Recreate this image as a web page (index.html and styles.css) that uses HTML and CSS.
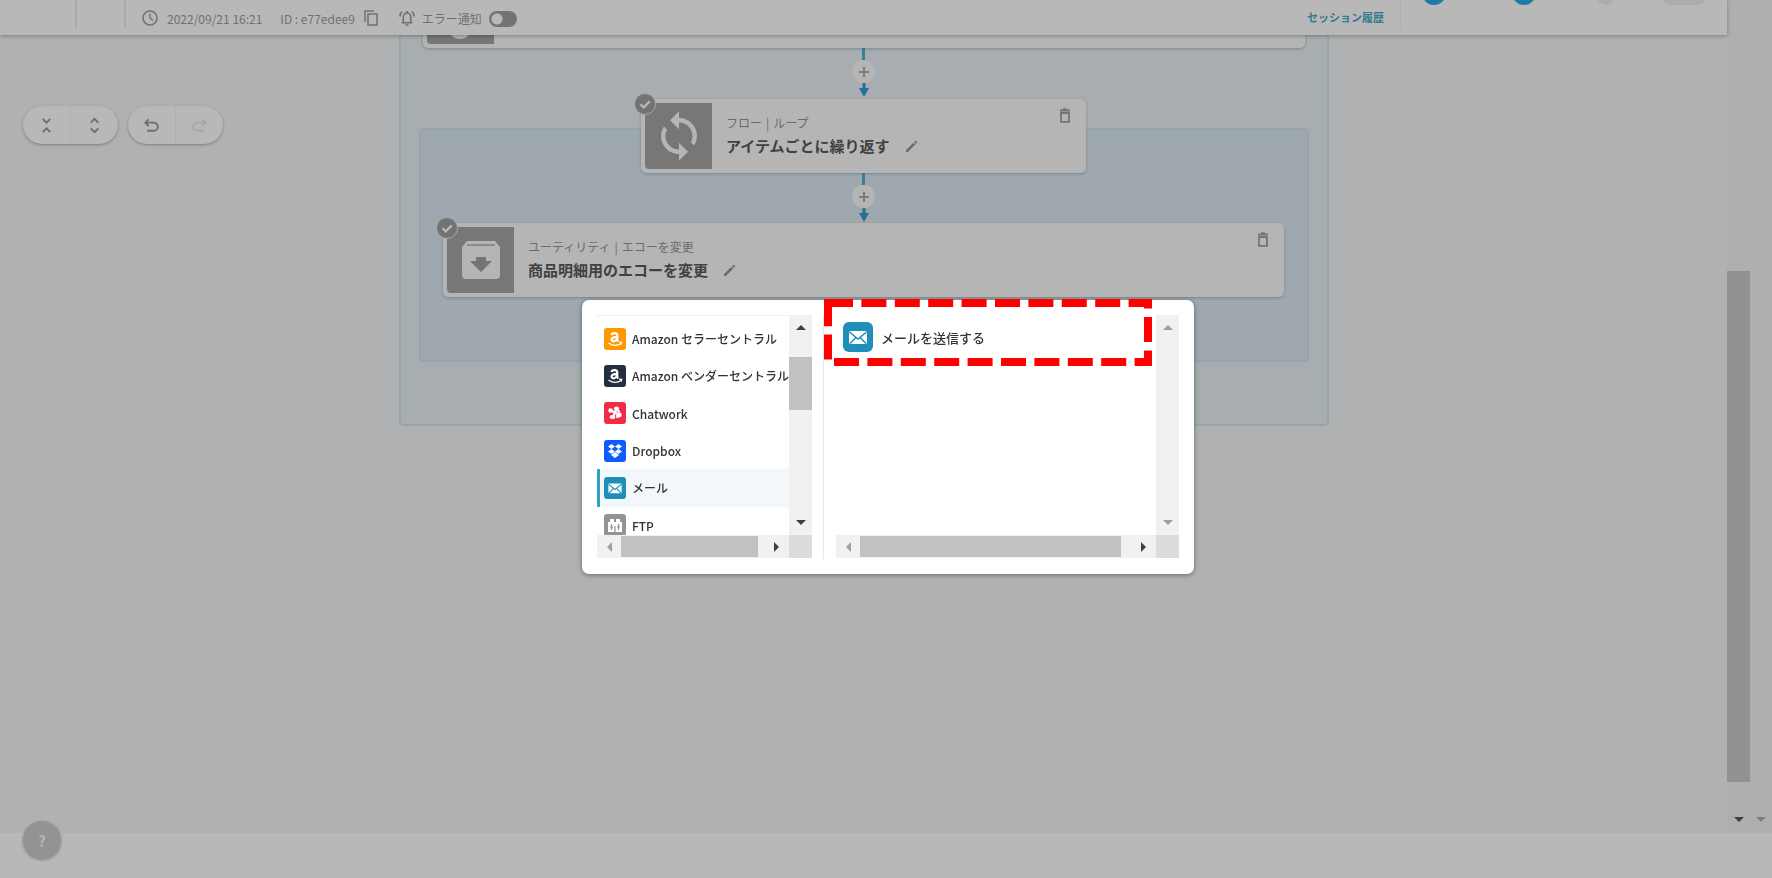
FILE: index.html
```html
<!DOCTYPE html>
<html lang="ja">
<head>
    <meta charset="UTF-8">
    <meta name="viewport" content="width=device-width, initial-scale=1.0">
    <title>フローエディタ</title>
    <link rel="stylesheet" href="styles.css">
</head>
<body>
    <svg class="sprite" aria-hidden="true">
        <symbol id="trash" viewBox="0 0 12 15">
            <path d="M1 2.500h10M4 1.200h4M2 5h8v8.800H2z" fill="none" stroke="currentColor" stroke-width="1.800"/>
        </symbol>
        <symbol id="pencil" viewBox="0 0 24 24">
            <path d="M2 18.500V22h3.500L19 8.500 15.500 5zM22 5.500a1.300 1.300 0 0 0 0-1.800l-1.700-1.700a1.300 1.300 0 0 0-1.800 0L17 3.500 20.500 7z" fill="currentColor"/>
        </symbol>
        <symbol id="amazon" viewBox="0 0 22 22">
            <path d="M7.500 7C8 4.300 13.200 4.300 13.200 7.500v3.700q0 1.300 1.200 2M13 9C10 9 7.600 9.500 7.600 11.500c0 2.600 4.200 2.400 5.400-.6" fill="none" stroke="#fff" stroke-width="2.300"/>
            <path d="M4.500 15q6.500 4.500 12.500.5M15.200 14.200l2.400.2-.5 2.300" fill="none" stroke="#fff" stroke-width="1.400"/>
        </symbol>
        <symbol id="mail" viewBox="0 0 30 30">
            <rect x="6" y="9" width="18" height="13" rx="1.500" fill="#fff"/>
            <path d="M6.500 10l8.500 7 8.500-7M7 21.500l6-6M23 21.500l-6-6" fill="none" stroke="#1d8fb8" stroke-width="1.500"/>
        </symbol>
        <symbol id="check" viewBox="0 0 22 22">
            <circle cx="11" cy="11" r="10.500" fill="#737373" stroke="#a5a9aa"/>
            <path d="M6.500 11.200l3.200 3.200 6-6" fill="none" stroke="#b8b8b8" stroke-width="2.200"/>
        </symbol>
        <symbol id="arrow" viewBox="0 0 10 14">
            <path d="M3.500 0h3v5H10L5 14 0 5h3.500z" fill="#23728f"/>
        </symbol>
        <symbol id="plus" viewBox="0 0 12 12">
            <path d="M6 1v10M1 6h10" stroke="#7d7d7d" stroke-width="2"/>
        </symbol>
    </svg>

    <div class="app">
        <header class="header">
            <div class="header-cell header-menu"></div>
            <div class="header-cell header-back"></div>
            <div class="meta">
                <svg class="icon-clock" viewBox="0 0 16 16"><circle cx="8" cy="8" r="7" fill="none" stroke="currentColor" stroke-width="1.500"/><path d="M8 3.800V8l3 2.500" fill="none" stroke="currentColor" stroke-width="1.300"/></svg>
                <span class="date">2022/09/21 16:21</span>
                <span class="flow-id">ID : e77edee9</span>
                <button class="icon-btn copy" aria-label="IDをコピー">
                    <svg viewBox="0 0 14 16"><path d="M1 12V1h9M4 4h9v11H4z" fill="none" stroke="currentColor" stroke-width="1.500"/></svg>
                </button>
                <svg class="icon-bell" viewBox="0 0 16 16"><path d="M2.500 12.800h11M4.300 12.500V7a3.700 4 0 0 1 7.400 0v5.500M8 1v2M6.500 15h3M1 6.500q0-3 2-5M15 6.500q0-3-2-5" fill="none" stroke="currentColor" stroke-width="1.600"/></svg>
                <label for="notify">エラー通知</label>
                <input type="checkbox" id="notify" class="toggle">
            </div>
            <a href="#" class="history">セッション履歴</a>
            <div class="actions">
                <button class="action blue" aria-label="テスト"></button>
                <button class="action blue" aria-label="保存"></button>
                <button class="action dot" aria-label="メニュー"></button>
                <button class="action bar" aria-label="公開"></button>
            </div>
        </header>

        <main class="canvas">
            <div class="toolbar">
                <div class="pill">
                    <button aria-label="折りたたむ"><svg viewBox="0 0 18 18"><path d="M5 2l4 4 4-4M5 16l4-4 4 4" fill="none" stroke="currentColor" stroke-width="2"/></svg></button>
                    <button aria-label="展開する"><svg viewBox="0 0 18 18"><path d="M5 6l4-4 4 4M5 12l4 4 4-4" fill="none" stroke="currentColor" stroke-width="2"/></svg></button>
                </div>
                <div class="pill">
                    <button aria-label="元に戻す"><svg viewBox="0 0 18 18"><path d="M6 2.500l-3.500 3.500L6 9.500M2.500 6h9a4.200 4.200 0 0 1 0 8.500H4.500" fill="none" stroke="currentColor" stroke-width="2"/></svg></button>
                    <button aria-label="やり直す" disabled><svg viewBox="0 0 18 18"><path d="M12 2.500l3.500 3.500L12 9.500M15.500 6h-9a4.200 4.200 0 0 0 0 8.500h7" fill="none" stroke="currentColor" stroke-width="2"/></svg></button>
                </div>
            </div>

            <div class="group outer">
                <article class="card card-top">
                    <div class="card-icon"><span class="half-circle"></span></div>
                </article>

                <div class="connector">
                    <span class="line"></span>
                    <button class="add" aria-label="追加"><svg><use href="#plus"/></svg></button>
                    <svg class="arrow"><use href="#arrow"/></svg>
                </div>

                <div class="group inner">
                    <article class="card card-loop">
                        <svg class="check"><use href="#check"/></svg>
                        <div class="card-icon">
                            <svg viewBox="0 0 24 24" class="glyph-loop"><path d="M12 4V1L8 5l4 4V6c3.310 0 6 2.690 6 6 0 1.010-.25 1.970-.7 2.800l1.460 1.460A7.930 7.930 0 0 0 20 12c0-4.420-3.580-8-8-8zm0 14c-3.310 0-6-2.690-6-6 0-1.010.25-1.970.7-2.800L5.240 7.740A7.930 7.930 0 0 0 4 12c0 4.420 3.580 8 8 8v3l4-4-4-4v3z" fill="#b5b5b5"/></svg>
                        </div>
                        <div class="card-body">
                            <p class="category">フロー<span>|</span>ループ</p>
                            <h2>アイテムごとに繰り返す <button class="icon-btn edit" aria-label="名前を編集"><svg><use href="#pencil"/></svg></button></h2>
                        </div>
                        <button class="icon-btn delete" aria-label="削除"><svg><use href="#trash"/></svg></button>
                    </article>

                    <div class="connector">
                        <span class="line"></span>
                        <button class="add" aria-label="追加"><svg><use href="#plus"/></svg></button>
                        <svg class="arrow"><use href="#arrow"/></svg>
                    </div>

                    <article class="card card-echo">
                        <svg class="check"><use href="#check"/></svg>
                        <div class="card-icon">
                            <svg viewBox="0 0 40 40" class="glyph-echo"><path d="M6 1h28l5 6v28a4 4 0 0 1-4 4H5a4 4 0 0 1-4-4V7z" fill="#b5b5b5"/><path d="M6 5h28" stroke="#8b8b8b" stroke-width="2"/><path d="M15 17h10v4h6L20 32 9 21h6z" fill="#737373"/></svg>
                        </div>
                        <div class="card-body">
                            <p class="category">ユーティリティ<span>|</span>エコーを変更</p>
                            <h2>商品明細用のエコーを変更 <button class="icon-btn edit" aria-label="名前を編集"><svg><use href="#pencil"/></svg></button></h2>
                        </div>
                        <button class="icon-btn delete" aria-label="削除"><svg><use href="#trash"/></svg></button>
                    </article>
                </div>
            </div>
        </main>

        <div class="page-scroll">
            <div class="page-thumb"></div>
            <span class="tri down dark"></span>
            <span class="tri down light"></span>
        </div>

        <footer class="footer"></footer>
    </div>

    <button class="help" aria-label="ヘルプ">?</button>

    <div class="modal" role="dialog" aria-label="アプリを選択">
        <div class="pane pane-apps">
            <div class="view">
                <ul class="apps">
                    <li><button><span class="app-icon seller"><svg><use href="#amazon"/></svg></span>Amazon セラーセントラル</button></li>
                    <li><button><span class="app-icon vendor"><svg><use href="#amazon"/></svg></span>Amazon ベンダーセントラル</button></li>
                    <li><button><span class="app-icon chatwork"><svg viewBox="0 0 22 22"><g fill="#fff"><ellipse cx="12.500" cy="6.500" rx="2.600" ry="2"/><ellipse cx="6.500" cy="8.500" rx="2.200" ry="2.300"/><ellipse cx="15.500" cy="12.800" rx="2.200" ry="2.600"/><ellipse cx="8.500" cy="15" rx="2.800" ry="2.100"/></g><path d="M7 8.500l8 4.200M12.500 7L9 15M15.500 8.500l-2 1.500M13 13l.5 3" stroke="#fff" stroke-width="2.200"/></svg></span>Chatwork</button></li>
                    <li><button><span class="app-icon dropbox"><svg viewBox="0 0 22 22"><path d="M7.500 4L11 6.500 7.500 9 4 6.500zM14.500 4L18 6.500 14.500 9 11 6.500zM7.500 9L11 11.500 7.500 14 4 11.500zM14.500 9l3.500 2.500-3.500 2.500-3.500-2.500zM7 15l4-3 4 3-4 3z" fill="#fff"/></svg></span>Dropbox</button></li>
                    <li class="selected"><button><span class="app-icon email"><svg viewBox="0 0 30 30"><use href="#mail"/></svg></span>メール</button></li>
                    <li><button><span class="app-icon ftp"><svg viewBox="0 0 22 22"><path d="M4 8h14v10H4zM6 5h4v4H6zM12 5h4v4h-4z" fill="#fff"/><path d="M7.500 10v6M14.500 10v6M11 12v6M6 13h3M13 13h3" stroke="#949494" stroke-width="1.200"/></svg></span>FTP</button></li>
                </ul>
            </div>
            <div class="scroll-v">
                <span class="tri up dark"></span>
                <div class="thumb-v"></div>
                <span class="tri down dark"></span>
            </div>
            <div class="scroll-h">
                <span class="tri left light"></span>
                <div class="thumb-h"></div>
                <span class="tri right dark"></span>
            </div>
            <div class="corner"></div>
        </div>
        <div class="pane pane-actions">
            <div class="view">
                <button class="operation"><span class="app-icon big"><svg><use href="#mail"/></svg></span>メールを送信する</button>
            </div>
            <div class="scroll-v">
                <span class="tri up light"></span>
                <span class="tri down light"></span>
            </div>
            <div class="scroll-h">
                <span class="tri left light"></span>
                <div class="thumb-h"></div>
                <span class="tri right dark"></span>
            </div>
            <div class="corner"></div>
        </div>
        <svg class="highlight" viewBox="0 0 328 68"><rect x="4" y="4" width="320" height="59" fill="none" stroke="#f00" stroke-width="8" stroke-dasharray="25 8.400"/></svg>
    </div>
</body>
</html>
```
FILE: styles.css
```css
* {
    box-sizing: border-box;
}
body {
    margin: 0;
    background: #b8b8b8;
    color: #3a3a3a;
    font-family: "Noto Sans CJK JP", "Noto Sans", sans-serif;
    font-size: 12px;
}
button {
    margin: 0;
    padding: 0;
    border: none;
    background: none;
    color: inherit;
    font: inherit;
    cursor: pointer;
}
svg {
    display: block;
}
.sprite {
    position: absolute;
    width: 0;
    height: 0;
}

/* page frame */
.app {
    display: grid;
    grid-template-columns: 1fr 45px;
    grid-template-rows: 35px 1fr 45px;
    height: 100vh;
    overflow: hidden;
}
.header {
    display: flex;
    z-index: 2;
    background: #b8b8b8;
    box-shadow: 0 1px 4px rgba(0, 0, 0, 0.3);
    color: #707070;
}
.header-cell {
    height: 28px;
    border-right: 2px solid #aaa;
}
.header-menu {
    width: 77px;
}
.header-back {
    width: 49px;
}
.meta {
    display: flex;
    align-items: center;
    height: 36px;
    margin-left: 16px;
    white-space: nowrap;
}
.icon-clock {
    width: 16px;
    height: 16px;
}
.date {
    margin-left: 9px;
}
.flow-id {
    margin-left: 18px;
}
.copy {
    margin: 0 21px 0 9px;
}
.copy svg {
    width: 14px;
    height: 16px;
}
.icon-bell {
    width: 16px;
    height: 16px;
    margin-right: 7px;
}
.toggle {
    appearance: none;
    width: 28px;
    height: 16px;
    margin: 2px 0 0 7px;
    border-radius: 8px;
    background: radial-gradient(circle at 8px 8px, #b8b8b8 5px, #737373 6px);
}
.history {
    margin-left: auto;
    padding-right: 16px;
    height: 28px;
    border-right: 1px solid #b0b0b0;
    color: #357a92;
    font-size: 11px;
    font-weight: bold;
    line-height: 35px;
    text-decoration: none;
}
.actions {
    display: flex;
    width: 326px;
    height: 24px;
    margin-top: -19px;
    padding-left: 21px;
}
.action {
    height: 24px;
    border-radius: 12px;
    background: #acacac;
}
.blue {
    width: 24px;
    margin-right: 66px;
    background: #1d7ba6;
}
.dot {
    width: 20px;
    margin: 0 44px 0 -6px;
}
.bar {
    width: 48px;
}
.canvas {
    position: relative;
    display: flex;
    flex-direction: column;
    align-items: center;
    overflow: hidden;
    background: #b0b1b3;
}
.page-scroll {
    grid-column: 2;
    grid-row: 1 / 3;
    display: grid;
    grid-template-columns: 23px 22px;
    grid-template-rows: 271fr 511fr 51fr;
    justify-items: center;
    background: #afafaf;
}
.page-thumb {
    grid-row: 2;
    width: 100%;
    background: #929292;
}
.page-scroll .tri {
    grid-row: 3;
    margin-top: 35px;
}
.page-scroll .dark {
    grid-column: 1;
}
.page-scroll .tri.light {
    grid-column: 2;
    color: #7c7c7c;
}
.footer {
    grid-column: 1 / 3;
    background: #b8b8b8;
}

/* canvas tools */
.toolbar {
    position: absolute;
    top: 71px;
    left: 23px;
    display: flex;
    gap: 10px;
}
.pill {
    display: flex;
    width: 95px;
    height: 38px;
    border-radius: 19px;
    background: #b8b8b8;
    box-shadow: 0 1px 3px rgba(0, 0, 0, 0.3);
    color: #6f6f6f;
}
.pill button {
    flex: 1;
    display: flex;
    align-items: center;
    justify-content: center;
}
.pill button + button {
    border-left: 1px solid #aeb0b2;
}
.pill button:disabled {
    color: #a5a5a5;
}
.pill svg {
    width: 17px;
    height: 17px;
}

/* flow nodes */
.group {
    display: flex;
    flex-direction: column;
    align-items: center;
    border: 2px solid #93a6ac;
    border-radius: 5px;
}
.outer {
    width: 930px;
    padding-bottom: 62px;
    border-top: none;
    border-radius: 0 0 5px 5px;
    background: #a7adb0;
}
.inner {
    width: 890px;
    margin-top: 30px;
    padding-bottom: 63px;
    background: #9fa8af;
}
.card {
    position: relative;
    display: flex;
    height: 74px;
    padding: 4px;
    border-radius: 5px;
    background: #b5b5b5;
    box-shadow: 0 1px 3px rgba(60, 80, 85, 0.4);
}
.card-top {
    width: 882px;
    margin-top: -61px;
}
.card-loop {
    width: 445px;
    margin-top: -31px;
}
.card-echo {
    width: 841px;
}
.card-icon {
    display: flex;
    align-items: center;
    justify-content: center;
    width: 67px;
    height: 66px;
    border-radius: 4px 0 0 4px;
    background: #777;
}
.card-top .card-icon {
    align-items: flex-end;
}
.half-circle {
    width: 24px;
    height: 24px;
    margin-bottom: 5px;
    border-radius: 50%;
    background: #b5b5b5;
}
.glyph-loop {
    width: 54px;
    height: 54px;
}
.glyph-echo {
    width: 40px;
    height: 40px;
}
.check {
    position: absolute;
    top: -6px;
    left: -7px;
    width: 22px;
    height: 22px;
}
.card-body {
    padding: 10px 0 0 14px;
}
.category {
    margin: 0;
    color: #6b6b6b;
    line-height: 20px;
}
.category span {
    margin: 0 4px;
}
h2 {
    display: flex;
    align-items: center;
    gap: 15px;
    margin: 1px 0 0;
    color: #414141;
    font-size: 15px;
    line-height: 24px;
}
.edit {
    color: #6b6b6b;
}
.edit svg {
    width: 13px;
    height: 13px;
}
.delete {
    position: absolute;
    top: 9px;
    right: 15px;
    color: #747474;
}
.delete svg {
    width: 12px;
    height: 15px;
}
.connector {
    display: flex;
    flex-direction: column;
    align-items: center;
    height: 50px;
}
.line {
    width: 3px;
    height: 12px;
    background: #3b7f96;
}
.add {
    display: flex;
    align-items: center;
    justify-content: center;
    width: 23px;
    height: 23px;
    border-radius: 50%;
    background: #b5b5b5;
}
.add svg {
    width: 12px;
    height: 12px;
}
.arrow {
    width: 10px;
    height: 14px;
}
.help {
    position: fixed;
    bottom: 19px;
    left: 23px;
    width: 38px;
    height: 38px;
    border-radius: 50%;
    background: #939393;
    box-shadow: 0 1px 3px rgba(0, 0, 0, 0.3);
    color: #b8b8b8;
    font-size: 15px;
    font-weight: bold;
}

/* app picker */
.modal {
    position: fixed;
    z-index: 5;
    top: 300px;
    left: calc(50% - 304px);
    display: flex;
    width: 612px;
    height: 274px;
    padding: 15px;
    border-radius: 7px;
    background: #fff;
    box-shadow: 0 1px 5px rgba(0, 0, 0, 0.4);
}
.pane {
    display: grid;
    grid-template-columns: 1fr 23px;
    grid-template-rows: 220px 23px;
}
.pane-apps {
    width: 215px;
}
.pane-actions {
    flex: 1;
    margin-left: 11px;
    padding-left: 12px;
    border-left: 1px solid #e8e8e8;
}
.view {
    overflow: hidden;
}
.pane-apps .view {
    border-top: 1px solid #eee;
}
.apps {
    display: grid;
    grid-auto-rows: 1fr;
    height: 224px;
    margin: 4px 0 0;
    padding: 0;
    list-style: none;
}
.apps li {
    display: flex;
    border-left: 3px solid transparent;
}
.apps .selected {
    border-left-color: #35a0bd;
    background: #f2f7fb;
}
.apps button {
    display: flex;
    align-items: center;
    gap: 6px;
    width: 100%;
    padding-left: 4px;
    color: #333;
    font-weight: 500;
    text-align: left;
    white-space: nowrap;
}
.app-icon {
    flex: none;
    width: 22px;
    height: 22px;
    border-radius: 3px;
}
.app-icon svg {
    width: 100%;
    height: 100%;
}
.seller {
    background: #ff9800;
}
.vendor {
    background: #232f3e;
}
.chatwork {
    background: #f22c44;
}
.dropbox {
    background: #0d5cff;
}
.email,
.big {
    background: #1d8fb8;
}
.ftp {
    background: #949494;
}
.operation {
    display: flex;
    align-items: center;
    gap: 8px;
    width: 100%;
    height: 44px;
    padding-left: 7px;
    color: #333;
    font-size: 13px;
    font-weight: 500;
}
.big {
    width: 30px;
    height: 30px;
    border-radius: 6px;
}
.scroll-v {
    display: flex;
    flex-direction: column;
    align-items: center;
    justify-content: space-between;
    padding: 10px 0;
    background: #f1f1f1;
}
.thumb-v {
    width: 23px;
    height: 53px;
    margin-bottom: 83px;
    background: #c1c1c1;
}
.scroll-h {
    display: flex;
    align-items: center;
    justify-content: space-between;
    padding: 0 10px;
    background: #f1f1f1;
}
.thumb-h {
    flex: 1;
    height: 21px;
    margin: 0 16px 0 9px;
    background: #c1c1c1;
}
.pane-actions .thumb-h {
    margin-right: 20px;
}
.corner {
    background: #dcdcdc;
}
.tri {
    width: 0;
    height: 0;
    border: 5px solid transparent;
    color: #404040;
}
.tri.light {
    color: #a0a0a0;
}
.tri.up {
    border-top: none;
    border-bottom-color: currentColor;
}
.tri.down {
    border-bottom: none;
    border-top-color: currentColor;
}
.tri.left {
    border-left: none;
    border-right-color: currentColor;
}
.tri.right {
    border-right: none;
    border-left-color: currentColor;
}
.highlight {
    position: absolute;
    top: -1px;
    left: 242px;
    width: 328px;
    height: 68px;
}
```
